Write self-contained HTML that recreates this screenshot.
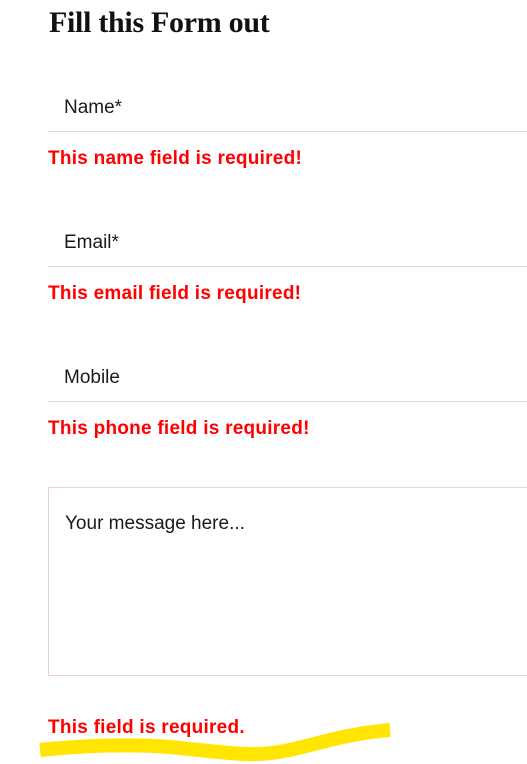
<!DOCTYPE html>
<html><head><meta charset="utf-8">
<style>
html,body{margin:0;padding:0;background:#fff;width:527px;height:764px;overflow:hidden;position:relative;font-family:"Liberation Sans",sans-serif}
.t{position:absolute;left:49px;top:6px;font-family:"Liberation Serif",serif;font-size:30px;font-weight:bold;color:#111;letter-spacing:-0.3px}
.lbl{position:absolute;left:64px;font-size:19px;color:#1a1a1a}
.line{position:absolute;left:48px;width:479px;height:1px;background:#e8d4da}
.err{position:absolute;left:48px;font-size:19px;font-weight:bold;color:#f00;letter-spacing:0.25px}
.ta{position:absolute;left:48px;top:487px;width:490px;height:189px;border:1px solid #ecd0d8;box-sizing:border-box}
</style></head><body>
<div class="t">Fill this Form out</div>
<div class="lbl" style="top:97px">Name*</div>
<div class="line" style="top:131px"></div>
<div class="err" style="top:148px">This name field is required!</div>
<div class="lbl" style="top:232px">Email*</div>
<div class="line" style="top:266px"></div>
<div class="err" style="top:283px">This email field is required!</div>
<div class="lbl" style="top:367px">Mobile</div>
<div class="line" style="top:401px"></div>
<div class="err" style="top:418px">This phone field is required!</div>
<div class="ta"></div>
<div class="lbl" style="top:513px;left:65px">Your message here...</div>
<div class="err" style="top:717px">This field is required.</div>
<svg style="position:absolute;left:0;top:0" width="527" height="764">
<path d="M40 750 C90 745,130 744,170 747 C210 751,240 755,260 754 C300 752,330 735,390 730" stroke="#ffe500" stroke-width="14" fill="none"/>
</svg>
</body></html>
